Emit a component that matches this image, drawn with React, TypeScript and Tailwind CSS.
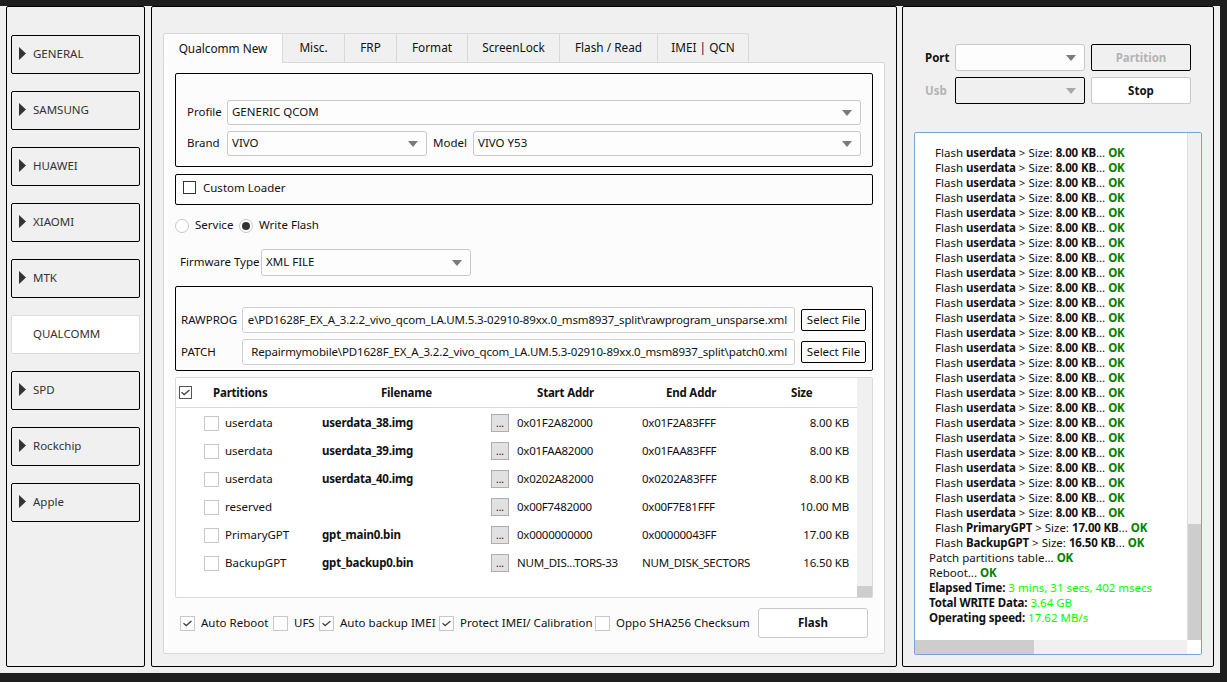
import type { ReactNode } from "react"

const brands = ["GENERAL", "SAMSUNG", "HUAWEI", "XIAOMI", "MTK", "QUALCOMM", "SPD", "Rockchip", "Apple"]

const tabs = [
  { name: "Qualcomm New", width: "w-[120px]" },
  { name: "Misc.", width: "w-[62px]" },
  { name: "FRP", width: "w-[52px]" },
  { name: "Format", width: "w-[71px]" },
  { name: "ScreenLock", width: "w-[92px]" },
  { name: "Flash / Read", width: "w-[98px]" },
  { name: "IMEI | QCN", width: "w-[91px]" },
]

const partitions = [
  { name: "userdata", file: "userdata_38.img", start: "0x01F2A82000", end: "0x01F2A83FFF", size: "8.00 KB" },
  { name: "userdata", file: "userdata_39.img", start: "0x01FAA82000", end: "0x01FAA83FFF", size: "8.00 KB" },
  { name: "userdata", file: "userdata_40.img", start: "0x0202A82000", end: "0x0202A83FFF", size: "8.00 KB" },
  { name: "reserved", file: "", start: "0x00F7482000", end: "0x00F7E81FFF", size: "10.00 MB" },
  { name: "PrimaryGPT", file: "gpt_main0.bin", start: "0x0000000000", end: "0x00000043FF", size: "17.00 KB" },
  { name: "BackupGPT", file: "gpt_backup0.bin", start: "NUM_DIS...TORS-33", end: "NUM_DISK_SECTORS", size: "16.50 KB" },
]

const flashLines = Array.from({ length: 25 }, () => ({ name: "userdata", size: "8.00 KB" }))
flashLines.push({ name: "PrimaryGPT", size: "17.00 KB" }, { name: "BackupGPT", size: "16.50 KB" })

function Arrow({ light }: { light?: boolean }) {
  return (
    <svg width="10" height="6" viewBox="0 0 10 6" className="shrink-0">
      <path d="M0 0h10L5 6z" fill={light ? "#a8a8a8" : "#7a7a7a"} />
    </svg>
  )
}

function Combo({ value, className }: { value?: string; className: string }) {
  return (
    <div className={`flex items-center justify-between rounded-[3px] border border-[#c8c8c8] bg-[#fdfdfd] pl-[4px] pr-[8px] ${className}`}>
      <span className="pb-[2px]">{value}</span>
      <Arrow />
    </div>
  )
}

function Check({ checked, className = "h-[15px] w-[15px] border-[#c8c8c8]" }: { checked?: boolean; className?: string }) {
  return (
    <div className={`flex shrink-0 items-center justify-center border bg-white ${className}`}>
      {checked && (
        <svg width="9" height="7" viewBox="0 0 9 7">
          <path d="M0.5 3.2 3.2 5.6 8.5 1" fill="none" stroke="#444" strokeWidth="1.3" />
        </svg>
      )}
    </div>
  )
}

function Group({ className, children }: { className: string; children: ReactNode }) {
  return <div className={`rounded-[2px] border border-black ${className}`}>{children}</div>
}

function Option({ label, checked, width }: { label: string; checked?: boolean; width: string }) {
  return (
    <div className={`flex items-center gap-[6px] ${width}`}>
      <Check checked={checked} />
      <span className="whitespace-nowrap">{label}</span>
    </div>
  )
}

function Radio({ selected }: { selected?: boolean }) {
  return (
    <div className="flex h-[14px] w-[14px] shrink-0 items-center justify-center rounded-full border border-[#c8c8c8] bg-white">
      {selected && <div className="h-[8px] w-[8px] rounded-full bg-[#333]" />}
    </div>
  )
}

function Sidebar() {
  return (
    <div className="flex h-[661px] w-[139px] shrink-0 flex-col gap-[17px] rounded-[2px] border border-black px-[4px] pt-[28px]">
      {brands.map((brand) =>
        brand === "QUALCOMM" ? (
          <div key={brand} className="flex h-[39px] items-center rounded-[2px] border border-[#dcdcdc] bg-white pb-[2px] pl-[21px] text-[#333]">
            {brand}
          </div>
        ) : (
          <div key={brand} className="flex h-[39px] items-center gap-[7px] rounded-[2px] border border-black pb-[2px] pl-[7px] text-[#333]">
            <svg width="7" height="13" viewBox="0 0 7 13" className="shrink-0">
              <path d="M0 0l7 6.5L0 13z" fill="#333" />
            </svg>
            <span>{brand}</span>
          </div>
        ),
      )}
    </div>
  )
}

function PathRow({ label, value }: { label: string; value: string }) {
  return (
    <div className="flex h-[26px] items-center">
      <span className="w-[61px] shrink-0">{label}</span>
      <div className="flex h-[26px] w-[553px] shrink-0 items-center justify-end overflow-hidden whitespace-nowrap rounded-[3px] border border-[#d0d0d0] bg-white pr-[7px] tracking-[-0.15px]">
        {value}
      </div>
      <div className="ml-[6px] flex h-[22px] w-[65px] shrink-0 items-center justify-center rounded-[2px] border border-black bg-white">
        Select File
      </div>
    </div>
  )
}

function PartitionTable() {
  return (
    <div className="mt-[6px] flex h-[221px] rounded-[2px] border border-[#d9d9d9] bg-white">
      <div className="flex-1">
        <div className="flex h-[30px] items-center border-b border-[#d9d9d9] pl-[3px] font-bold tracking-[-0.2px]">
          <Check checked className="h-[13px] w-[13px] border-[#555]" />
          <span className="ml-[21px] w-[168px]">Partitions</span>
          <span className="w-[156px]">Filename</span>
          <span className="w-[129px]">Start Addr</span>
          <span className="w-[125px]">End Addr</span>
          <span>Size</span>
        </div>
        <div className="pt-[1px]">
          {partitions.map((row) => (
            <div key={row.file + row.name} className="flex h-[28px] items-center pl-[28px] pr-[8px]">
              <Check />
              <span className="ml-[6px] w-[97px]">{row.name}</span>
              <span className="w-[169px] font-bold tracking-[-0.2px]">{row.file}</span>
              <div className="flex h-[18px] w-[18px] shrink-0 items-center justify-center border border-[#adadad] bg-[#e1e1e1] text-[10px]">
                ...
              </div>
              <span className="ml-[8px] w-[125px] whitespace-nowrap tracking-[-0.25px]">{row.start}</span>
              <span className="flex-1 whitespace-nowrap tracking-[-0.25px]">{row.end}</span>
              <span className="tracking-[-0.15px]">{row.size}</span>
            </div>
          ))}
        </div>
      </div>
      <div className="flex w-[15px] flex-col justify-end bg-[#f0f0f0]">
        <div className="h-[11px] bg-[#cdcdcd]" />
      </div>
    </div>
  )
}

function MainPanel() {
  return (
    <div className="h-[661px] w-[746px] shrink-0 rounded-[2px] border border-black px-[11px] pt-[26px]">
      <div className="flex h-[29px] text-[11.8px]">
        {tabs.map((tab, i) => (
          <div
            key={tab.name}
            className={`flex items-center justify-center border-t border-r border-[#d9d9d9] pb-[2px] ${tab.width} ${
              i === 0 ? "relative z-10 h-[30px] rounded-tl-[3px] border-l bg-[#fcfcfc]" : "bg-[#f0f0f0]"
            } ${i === tabs.length - 1 ? "rounded-tr-[3px]" : ""}`}
          >
            {tab.name}
          </div>
        ))}
      </div>
      <div className="h-[592px] w-[722px] rounded-[2px] border border-[#d9d9d9] bg-[#fcfcfc] px-[11px] pt-[10px]">
        <Group className="h-[94px] pl-[11px] pr-[11px] pt-[26px]">
          <div className="flex h-[25px] items-center">
            <span className="w-[40px] shrink-0 pb-[2px]">Profile</span>
            <Combo value="GENERIC QCOM" className="h-[25px] flex-1" />
          </div>
          <div className="mt-[6px] flex h-[25px] items-center">
            <span className="w-[40px] shrink-0 pb-[2px]">Brand</span>
            <Combo value="VIVO" className="h-[25px] w-[200px]" />
            <span className="ml-[6px] w-[40px] shrink-0 pb-[2px]">Model</span>
            <Combo value="VIVO Y53" className="h-[25px] flex-1" />
          </div>
        </Group>
        <Group className="mt-[7px] flex h-[31px] items-center gap-[7px] pb-[4px] pl-[7px]">
          <Check className="h-[13px] w-[13px] border-[#333]" />
          <span>Custom Loader</span>
        </Group>
        <div className="mt-[13px] flex h-[16px] items-center">
          <Radio />
          <span className="ml-[6px] w-[44px] pb-[2px]">Service</span>
          <Radio selected />
          <span className="ml-[6px] pb-[2px]">Write Flash</span>
        </div>
        <div className="mt-[15px] flex h-[27px] items-center pl-[5px]">
          <span className="w-[81px] whitespace-nowrap pb-[2px]">Firmware Type</span>
          <Combo value="XML FILE" className="h-[27px] w-[210px]" />
        </div>
        <Group className="mt-[10px] flex h-[85px] flex-col gap-[6px] pl-[5px] pt-[20px]">
          <PathRow label="RAWPROG" value="e\PD1628F_EX_A_3.2.2_vivo_qcom_LA.UM.5.3-02910-89xx.0_msm8937_split\rawprogram_unsparse.xml" />
          <PathRow label="PATCH" value="Repairmymobile\PD1628F_EX_A_3.2.2_vivo_qcom_LA.UM.5.3-02910-89xx.0_msm8937_split\patch0.xml" />
        </Group>
        <PartitionTable />
        <div className="mt-[10px] flex h-[30px] items-center pl-[5px] pr-[5px]">
          <Option label="Auto Reboot" checked width="w-[93px]" />
          <Option label="UFS" width="w-[46px]" />
          <Option label="Auto backup IMEI" checked width="w-[120px]" />
          <Option label="Protect IMEI/ Calibration" checked width="w-[156px]" />
          <Option label="Oppo SHA256 Checksum" width="w-[163px]" />
          <div className="flex h-[30px] w-[110px] items-center justify-center rounded-[3px] border border-[#c8c8c8] bg-white font-bold">
            Flash
          </div>
        </div>
      </div>
    </div>
  )
}

function LogLine({ children, indent }: { children: ReactNode; indent?: boolean }) {
  return <div className={`h-[15px] leading-[15px] whitespace-nowrap ${indent ? "pl-[6px]" : ""}`}>{children}</div>
}

function LogPanel() {
  return (
    <div className="mt-[28px] flex h-[523px] w-[288px] flex-col rounded-[2px] border border-[#7da2ce] bg-white">
      <div className="flex h-[507px]">
        <div className="w-[272px] overflow-hidden pl-[14px] pt-[12px] [&_b]:tracking-[-0.15px]">
          {flashLines.map((line, i) => (
            <LogLine key={i} indent>
              Flash <b>{line.name}</b> &gt; Size: <b>{line.size}</b>... <b className="text-[#008000]">OK</b>
            </LogLine>
          ))}
          <LogLine>
            Patch partitions table... <b className="text-[#008000]">OK</b>
          </LogLine>
          <LogLine>
            Reboot... <b className="text-[#008000]">OK</b>
          </LogLine>
          <LogLine>
            <b>Elapsed Time:</b> <span className="text-[#00ff00]">3 mins, 31 secs, 402 msecs</span>
          </LogLine>
          <LogLine>
            <b>Total WRITE Data:</b> <span className="text-[#00ff00]">3.64 GB</span>
          </LogLine>
          <LogLine>
            <b>Operating speed:</b> <span className="text-[#00ff00]">17.62 MB/s</span>
          </LogLine>
        </div>
        <div className="flex w-[14px] flex-col justify-end border-l border-[#dcdcdc] bg-[#f0f0f0]">
          <div className="h-[116px] bg-[#cdcdcd]" />
        </div>
      </div>
      <div className="flex h-[14px]">
        <div className="w-[272px] bg-[#f0f0f0]">
          <div className="h-[14px] w-[119px] bg-[#cdcdcd]" />
        </div>
        <div className="w-[14px] bg-white" />
      </div>
    </div>
  )
}

function RightPanel() {
  return (
    <div className="h-[661px] w-[312px] shrink-0 rounded-[2px] border border-black pl-[11px] pt-[37px]">
      <div className="flex flex-col gap-[6px] pl-[11px]">
        <div className="flex h-[27px] items-center">
          <span className="w-[30px] font-bold">Port</span>
          <Combo className="h-[27px] w-[130px]" />
          <div className="ml-[6px] flex h-[27px] w-[100px] items-center justify-center rounded-[2px] border border-black font-bold text-[#b4b4b4]">
            Partition
          </div>
        </div>
        <div className="flex h-[27px] items-center">
          <span className="w-[30px] font-bold text-[#b4b4b4]">Usb</span>
          <div className="flex h-[27px] w-[130px] items-center justify-end rounded-[2px] border border-black pr-[8px]">
            <Arrow light />
          </div>
          <div className="ml-[6px] flex h-[27px] w-[100px] items-center justify-center rounded-[2px] border border-[#c8c8c8] bg-white font-bold">
            Stop
          </div>
        </div>
      </div>
      <LogPanel />
    </div>
  )
}

export default function App() {
  return (
    <div className="h-[682px] w-[1227px] overflow-hidden bg-[#1e1e1e] pt-[6px] font-['Noto_Sans','Open_Sans',sans-serif] text-[11.5px] leading-[16px] text-[#111]">
      <div className="flex h-[667px] w-[1220px] items-start bg-[#f0f0f0] pl-[6px]">
        <Sidebar />
        <div className="ml-[6px]">
          <MainPanel />
        </div>
        <div className="ml-[5px]">
          <RightPanel />
        </div>
      </div>
    </div>
  )
}
